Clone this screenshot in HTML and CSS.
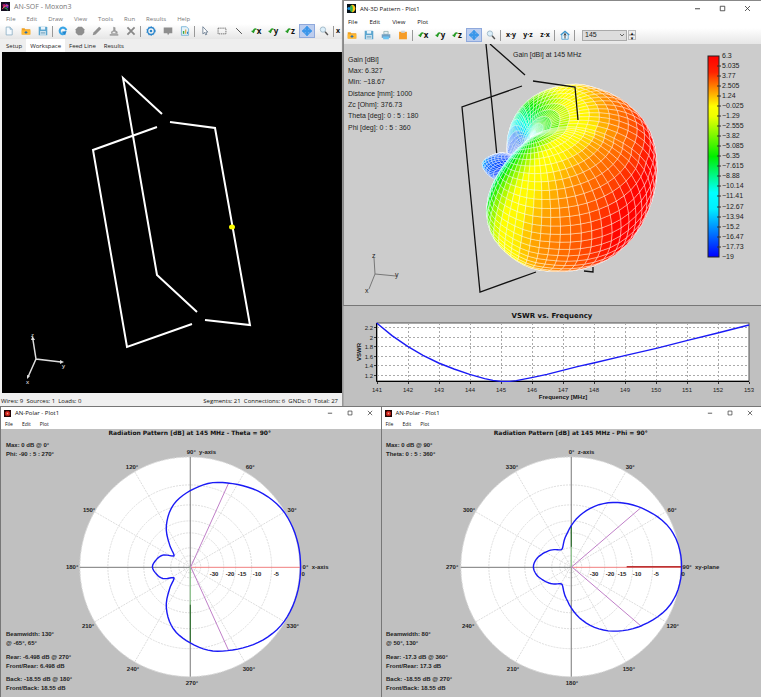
FILE: index.html
```html
<!DOCTYPE html>
<html lang="en">
<head>
<meta charset="utf-8">
<title>AN-SOF - Moxon3</title>
<link rel="stylesheet" href="styles.css">
</head>
<body>
<svg class="defs" width="0" height="0" aria-hidden="true">
  <defs>
    <linearGradient id="spectrum" x1="0" y1="0" x2="0" y2="1">
      <stop offset="0" stop-color="#f00"/><stop offset=".08" stop-color="#f20"/><stop offset=".25" stop-color="#ff0"/><stop offset=".3" stop-color="#ef0"/>
      <stop offset=".5" stop-color="#0e0"/><stop offset=".68" stop-color="#0ff"/><stop offset=".76" stop-color="#0ef"/><stop offset="1" stop-color="#00f"/>
    </linearGradient>
    <symbol id="new" viewBox="0 0 14 14"><path d="M3 1.5h5.5l3 3v8H3z" fill="#f4faff" stroke="#7fa5bd"/><path d="M8.5 1.5v3h3" fill="#cfe6f5" stroke="#7fa5bd"/></symbol>
    <symbol id="open" viewBox="0 0 14 14"><path d="M1 3h4l1 1.500h7V12H1z" fill="#f0a020"/><path d="M1 6h12v6H1z" fill="#ffb933"/><path d="M7 7v4M5 9h4" stroke="#2c6fae" stroke-width="1.500"/></symbol>
    <symbol id="save" viewBox="0 0 14 14"><path d="M1 1h11l1 1v11H1z" fill="#5aa5cf"/><path d="M4 1h6v4H4z" fill="#e8f3fa"/><path d="M3 7h8v6H3z" fill="#d5e8f3"/><path d="M4 9h6M4 11h6" stroke="#6e9fbb"/></symbol>
    <symbol id="undo" viewBox="0 0 14 14"><path d="M11.500 6a4.600 4.600 0 1 0-2.500 5" fill="none" stroke="#3aa5e6" stroke-width="3"/><path d="M5 8l7-1-2 6z" fill="#1f86cf"/></symbol>
    <symbol id="stop" viewBox="0 0 14 14"><path d="M4.500 1h5L13 4.500v5L9.500 13h-5L1 9.500v-5z" fill="#8e8e8e"/></symbol>
    <symbol id="pen" viewBox="0 0 14 14"><path d="M1 13l1-4 8-8 3 3-8 8z" fill="#909090"/></symbol>
    <symbol id="stamp" viewBox="0 0 14 14"><path d="M6 1l3 1v4l3 2v3H3V8l3-2z" fill="#999"/><path d="M1 12.500h12" stroke="#777" stroke-width="1.500"/><path d="M5 8h4v2H5z" fill="#eee"/></symbol>
    <symbol id="del" viewBox="0 0 14 14"><path d="M2 2l10 10M12 2L2 12" stroke="#888" stroke-width="2.500"/></symbol>
    <symbol id="gear" viewBox="0 0 14 14"><circle cx="7" cy="7" r="4.800" fill="none" stroke="#2b86cc" stroke-width="2"/><circle cx="7" cy="7" r="6.200" fill="none" stroke="#2b86cc" stroke-dasharray="2 2"/><circle cx="7" cy="7" r="1.800" fill="#2b86cc"/></symbol>
    <symbol id="note" viewBox="0 0 14 14"><path d="M1 2h12v8H9l-2 3-1-3H1z" fill="#8e8e8e"/></symbol>
    <symbol id="report" viewBox="0 0 14 14"><path d="M2 1h7l3 3v9H2z" fill="#e4f2fa" stroke="#5aa5cf"/><path d="M5 11V7" stroke="#39a845" stroke-width="2"/><path d="M8 11V5" stroke="#e0a030" stroke-width="1.500"/><path d="M10.500 11V8" stroke="#2c7fc0" stroke-width="1.500"/></symbol>
    <symbol id="arrow" viewBox="0 0 14 14"><path d="M4 1v10l2.500-2L8 12.500l1.500-.8L8.200 8.500H11z" fill="#fff" stroke="#51657e"/></symbol>
    <symbol id="rect" viewBox="0 0 14 14"><path d="M1.500 3h11v8h-11z" fill="none" stroke="#444" stroke-dasharray="2 1"/></symbol>
    <symbol id="line" viewBox="0 0 14 14"><path d="M3 3l8 8" stroke="#444" stroke-width="1.300"/></symbol>
    <symbol id="rot" viewBox="0 0 14 14"><path d="M13 3C8 1 5 4 6 11" fill="none" stroke="#259b24" stroke-width="3"/><path d="M0 7l10-3-4 8z" fill="#259b24"/></symbol>
    <symbol id="move" viewBox="0 0 14 14"><path d="M7 0l3 3.500H8.500v2h2V4L14 7l-3.500 3V8.500h-2v2H10L7 14l-3-3.500h1.500v-2h-2V10L0 7l3.500-3v1.500h2v-2H4z" fill="#3b97ea" stroke="#3b97ea"/></symbol>
    <symbol id="find" viewBox="0 0 14 14"><circle cx="5.500" cy="5" r="3.700" fill="#dceffa" stroke="#9ab4c4" stroke-width="1.200"/><path d="M8.500 8l4 4.500" stroke="#555" stroke-width="2"/></symbol>
    <symbol id="print" viewBox="0 0 14 14"><path d="M4 2h6v4H4z" fill="#e3eef5" stroke="#8aa"/><path d="M1 6h12v5H1z" fill="#6f9fc2"/><path d="M3 9h8v4H3z" fill="#6ac3f2"/></symbol>
    <symbol id="clip" viewBox="0 0 14 14"><path d="M1.500 2.500h11V13h-11z" fill="#f69c26"/><path d="M4.500 1h5v3h-5z" fill="#cfd4d8"/></symbol>
    <symbol id="home" viewBox="0 0 14 14"><path d="M2.500 6v7h9V6" fill="#e8f5fc" stroke="#3b95cc"/><path d="M1 7l6-5 6 5" fill="none" stroke="#3b95cc" stroke-width="1.800"/><path d="M7 5v7M5.500 7.500L7 5l1.500 2.500" stroke="#444" stroke-width="1.400" fill="none"/></symbol>
    <symbol id="min" viewBox="0 0 14 14"><path d="M2 7.500h10" stroke="#333" stroke-width="1.800"/></symbol>
    <symbol id="max" viewBox="0 0 14 14"><path d="M2.500 2.500h9v9h-9z" fill="none" stroke="#333" stroke-width="1.600"/></symbol>
    <symbol id="close" viewBox="0 0 14 14"><path d="M2 2l10 10M12 2L2 12" stroke="#333" stroke-width="1.600"/></symbol>
    <symbol id="app" viewBox="0 0 14 14"><path d="M0 0h14v14H0z" fill="#150c20"/><path d="M2 4l4-1 2 3-4 4z" fill="#b51d6f"/><path d="M7 2l5 3-1 5-3-2z" fill="#7a35c8"/><path d="M5 9l4 1 1 3" stroke="#35b860" fill="none" stroke-width="1.500"/><path d="M2 11l3-4 6-2" stroke="#ef5a6a" fill="none" stroke-width="1.500"/></symbol>
    <symbol id="app3d" viewBox="0 0 14 14"><path d="M0 0h14v14H0z" fill="#061018"/><path d="M5 7c0-9 8-6 8 0s-8 9-8 0z" fill="#ffc414"/><path d="M5 7c0-7 4-7 4 0s-4 8-4 0z" fill="#28b04a"/><circle cx="3" cy="7" r="2.500" fill="#2192d8"/></symbol>
    <symbol id="appolar" viewBox="0 0 14 14"><path d="M0 0h14v14H0z" fill="#240606"/><circle cx="7" cy="7" r="5" fill="#e0261c"/><path d="M7 2v10M2 7h10" stroke="#8d1210"/><circle cx="7" cy="7" r="1.800" fill="#ff9a8a"/></symbol>
    <g id="polargrid">
      <circle class="disc" cx="190" cy="138" r="110"/>
      <g class="grid">
        <circle cx="190" cy="138" r="110"/><circle cx="190" cy="138" r="82"/><circle cx="190" cy="138" r="62"/><circle cx="190" cy="138" r="46"/>
        <circle cx="190" cy="138" r="34"/><circle cx="190" cy="138" r="19"/><circle cx="190" cy="138" r="11"/><circle cx="190" cy="138" r="6"/>
        <path d="M95 83l190 110M95 193L285 83M135 43l110 190M135 233L245 43"/>
      </g>
      <path class="axis" d="M80 138.500h110M190.500 28v220"/>
      <path class="red" d="M191 138.500h110"/>
    </g>
  </defs>
</svg>
<main class="desktop">
  <div class="upper">
    <section class="window main-window">
      <header class="titlebar"><svg class="logo"><use href="#app"/></svg><h1 class="title muted">AN-SOF - Moxon3</h1></header>
      <nav class="menubar muted"><button>File</button><button>Edit</button><button>Draw</button><button>View</button><button>Tools</button><button>Run</button><button>Results</button><button>Help</button></nav>
      <div class="toolbar">
        <button aria-label="New"><svg><use href="#new"/></svg></button>
        <button aria-label="Open"><svg><use href="#open"/></svg></button>
        <button aria-label="Save"><svg><use href="#save"/></svg></button>
        <i class="sep"></i>
        <button aria-label="Undo"><svg><use href="#undo"/></svg></button>
        <button aria-label="Stop"><svg><use href="#stop"/></svg></button>
        <button aria-label="Edit wire"><svg><use href="#pen"/></svg></button>
        <button aria-label="Stamp"><svg><use href="#stamp"/></svg></button>
        <button aria-label="Delete"><svg><use href="#del"/></svg></button>
        <i class="sep"></i>
        <button aria-label="Preferences"><svg><use href="#gear"/></svg></button>
        <button aria-label="Notes"><svg><use href="#note"/></svg></button>
        <button aria-label="Report"><svg><use href="#report"/></svg></button>
        <i class="sep"></i>
        <button aria-label="Select"><svg><use href="#arrow"/></svg></button>
        <button aria-label="Select area"><svg><use href="#rect"/></svg></button>
        <button aria-label="Line"><svg><use href="#line"/></svg></button>
        <button class="turn"><svg><use href="#rot"/></svg>x</button>
        <button class="turn"><svg><use href="#rot"/></svg>y</button>
        <button class="turn"><svg><use href="#rot"/></svg>z</button>
        <button class="active" aria-label="Move"><svg><use href="#move"/></svg></button>
        <button aria-label="Zoom"><svg><use href="#find"/></svg></button>
        <i class="sep"></i>
        <button class="plane">x</button>
      </div>
      <nav class="tabs"><button>Setup</button><button class="current">Workspace</button><button>Feed Line</button><button>Results</button></nav>
      <svg class="workspace" viewBox="0 0 340 341" role="img" aria-label="Antenna wires">
        <path class="wire" d="M160 62L121 26l34 197 40 37M155 75L91 98l34 197 65-23M168 70l45 6 35 197-45-5"/>
        <ellipse cx="230" cy="175" rx="3" ry="2.500" fill="#ff0"/>
        <path class="triad" d="M31 288l3 19 25 3M34 307l-8 18"/>
        <path d="M29 288l1.500-4 2.500 4zM58 308l4 2-4 2zM25 323l3 1-3 3z" fill="#ddd"/>
        <g class="ws-label"><text x="29" y="285">z</text><text x="60" y="316">y</text><text x="24" y="332">x</text></g>
      </svg>
      <footer class="status"><span>Wires: 9&nbsp; Sources: 1&nbsp; Loads: 0</span><span class="right">Segments: 21&nbsp; Connections: 6&nbsp; GNDs: 0&nbsp; Total: 27</span></footer>
    </section>
    <div class="side">
      <section class="window pattern">
        <header class="titlebar"><svg class="logo"><use href="#app3d"/></svg><h2 class="title">AN-3D Pattern - Plot1</h2>
          <div class="controls"><button aria-label="Minimize"><svg><use href="#min"/></svg></button><button aria-label="Maximize"><svg><use href="#max"/></svg></button><button aria-label="Close"><svg><use href="#close"/></svg></button></div></header>
        <nav class="menubar"><button>File</button><button>Edit</button><button>View</button><button>Plot</button></nav>
        <div class="toolbar">
          <button aria-label="Open"><svg><use href="#open"/></svg></button>
          <button aria-label="Save"><svg><use href="#save"/></svg></button>
          <button aria-label="Print"><svg><use href="#print"/></svg></button>
          <button aria-label="Copy"><svg><use href="#clip"/></svg></button>
          <i class="sep"></i>
          <button class="turn"><svg><use href="#rot"/></svg>x</button>
          <button class="turn"><svg><use href="#rot"/></svg>y</button>
          <button class="turn"><svg><use href="#rot"/></svg>z</button>
          <button class="active" aria-label="Move"><svg><use href="#move"/></svg></button>
          <button aria-label="Zoom"><svg><use href="#find"/></svg></button>
          <i class="sep"></i>
          <button class="plane">x·y</button><button class="plane">y·z</button><button class="plane">z·x</button>
          <i class="sep"></i>
          <button aria-label="Home"><svg><use href="#home"/></svg></button>
          <i class="sep"></i>
          <span class="combo"><select aria-label="Frequency"><option>145</option></select><svg class="chevron" viewBox="0 0 6 4"><path d="M1 1l2 2 2-2"/></svg></span>
          <span class="spin"><button aria-label="Up">▴</button><button aria-label="Down">▾</button></span>
        </div>
        <svg class="plot3d" viewBox="1 0 417 261" role="img" aria-label="3D gain pattern">
          <g class="info"><text x="170" y="13">Gain [dBi] at 145 MHz</text><text x="5" y="18">Gain [dBi]</text><text x="5" y="29">Max: 6.327</text><text x="5" y="40">Min: −18.67</text><text x="5" y="52">Distance [mm]: 1000</text><text x="5" y="63">Zc [Ohm]: 376.73</text><text x="5" y="74">Theta [deg]: 0 : 5 : 180</text><text x="5" y="86">Phi [deg]: 0 : 5 : 360</text></g>
          <path class="ink" d="M143 0l11 112M147 0l35 31M179 42l-60 21 18 185 56-20M241 227l9 1v-5"/>
          <g id="surface"></g>
          <path class="ink" d="M190 37l42 6 3 33"/>
          <path class="axes3d" d="M31 214l1 16 21 2M32 230l-6 15"/>
          <g class="info"><text x="29" y="214">z</text><text x="52" y="233">y</text><text x="22" y="249">x</text></g>
          <rect x="365" y="12" width="11" height="201" fill="url(#spectrum)" stroke="#222"/>
          <path class="ticks" d="M374 22h4M374 32h4M374 42h4M374 52h4M374 62h4M374 72h4M374 82h4M374 92h4M374 102h4M374 112h4M374 122h4M374 132h4M374 142h4M374 152h4M374 163h4M374 173h4M374 183h4M374 193h4M374 203h4"/>
          <g class="info"><text x="379" y="14">6.3</text><text x="379" y="24">5.035</text><text x="379" y="34">3.77</text><text x="379" y="44">2.505</text><text x="379" y="54">1.24</text><text x="379" y="64">−0.025</text><text x="379" y="74">−1.29</text><text x="379" y="84">−2.555</text><text x="379" y="94">−3.82</text><text x="379" y="104">−5.085</text><text x="379" y="114">−6.35</text><text x="379" y="124">−7.615</text><text x="379" y="134">−8.88</text><text x="379" y="144">−10.14</text><text x="379" y="154">−11.41</text><text x="379" y="165">−12.67</text><text x="379" y="175">−13.94</text><text x="379" y="185">−15.2</text><text x="379" y="195">−16.47</text><text x="379" y="205">−17.73</text><text x="379" y="215">−19</text></g>
        </svg>
      </section>
      <section class="vswr">
        <svg viewBox="1 0 417 100" role="img" aria-label="VSWR vs. Frequency">
          <text class="heading" x="209" y="12">VSWR vs. Frequency</text>
          <rect x="34" y="17" width="372" height="58" fill="#fff" stroke="#555"/>
          <path class="dash" d="M34 21.500h372M34 31.500h372M34 40.500h372M34 50.500h372M34 59.500h372M34 69.500h372M65.500 17v58M96.500 17v58M127.500 17v58M158.500 17v58M189.500 17v58M220.500 17v58M251.500 17v58M282.500 17v58M313.500 17v58M344.500 17v58M375.500 17v58"/>
          <path class="ticks" d="M31 21.500h3M31 31.500h3M31 40.500h3M31 50.500h3M31 59.500h3M31 69.500h3M34.500 76v2M65.500 76v2M96.500 76v2M127.500 76v2M158.500 76v2M189.500 76v2M220.500 76v2M251.500 76v2M282.500 76v2M313.500 76v2M344.500 76v2M375.500 76v2M406.500 76v2"/>
          <path d="M33.500 17v58.500h372.500" fill="none" stroke="#000"/>
          <polyline class="curve" transform="translate(0 -1) scale(.3333)" points="101,54 147,92 194,124 240,151 287,174 333,192 380,208 425,221 450,226 474,229 500,229 520,227 566,218 612,208 659,196 706,184 752,174 845,152 940,130 1031,107 1124,84 1218,60"/>
          <g class="tick-label end"><text x="30" y="24">2.2</text><text x="30" y="34">2</text><text x="30" y="43">1.8</text><text x="30" y="53">1.6</text><text x="30" y="62">1.4</text><text x="30" y="72">1.2</text></g>
          <g class="tick-label mid"><text x="34" y="86">141</text><text x="65" y="86">142</text><text x="96" y="86">143</text><text x="127" y="86">144</text><text x="158" y="86">145</text><text x="189" y="86">146</text><text x="220" y="86">147</text><text x="251" y="86">148</text><text x="282" y="86">149</text><text x="313" y="86">150</text><text x="344" y="86">151</text><text x="375" y="86">152</text><text x="406" y="86">153</text></g>
          <text class="axis-label" x="220" y="93">Frequency [MHz]</text>
          <text class="axis-label" transform="translate(18 46) rotate(-90)">VSWR</text>
        </svg>
      </section>
    </div>
  </div>
  <div class="lower">
    <section class="window polar">
      <header class="titlebar"><svg class="logo"><use href="#appolar"/></svg><h2 class="title">AN-Polar - Plot1</h2>
        <div class="controls"><button aria-label="Minimize"><svg><use href="#min"/></svg></button><button aria-label="Maximize"><svg><use href="#max"/></svg></button><button aria-label="Close"><svg><use href="#close"/></svg></button></div></header>
      <nav class="menubar"><button>File</button><button>Edit</button><button>Plot</button></nav>
      <svg viewBox="1 0 380 268" role="img" aria-label="Radiation pattern, Theta 90 degrees">
        <use href="#polargrid"/>
        <path class="green" d="M190.500 138v38"/><path class="dark-green" d="M190.500 176v38"/>
        <path class="beam" d="M229 54l-38 84 38 84"/>
        <path class="curve" id="azimuth"/>
        <text class="heading small" x="190" y="6">Radiation Pattern [dB] at 145 MHz - Theta = 90°</text>
        <g class="note"><text x="6" y="18">Max: 0 dB @ 0°</text><text x="6" y="27">Phi: -90 : 5 : 270°</text><text x="6" y="207">Beamwidth: 130°</text><text x="6" y="216">@ -65°, 65°</text><text x="6" y="230">Rear: -6.498 dB @ 270°</text><text x="6" y="239">Front/Rear: 6.498 dB</text><text x="6" y="252">Back: -18.55 dB @ 180°</text><text x="6" y="261">Front/Back: 18.55 dB</text>
        <text x="187" y="25">90°&nbsp; y-axis</text><text x="126" y="40">120°</text><text x="246" y="40">60°</text><text x="83" y="83">150°</text><text x="288" y="83">30°</text><text x="66" y="140">180°</text><text x="303" y="140">0°&nbsp; x-axis</text><text x="82" y="199">210°</text><text x="287" y="199">330°</text><text x="127" y="242">240°</text><text x="243" y="242">300°</text><text x="186" y="256">270°</text>
        <text x="210" y="147">-30</text><text x="226" y="147">-20</text><text x="238" y="147">-15</text><text x="253" y="147">-10</text><text x="274" y="147">-5</text><text x="302" y="147">0</text></g>
      </svg>
    </section>
    <section class="window polar">
      <header class="titlebar"><svg class="logo"><use href="#appolar"/></svg><h2 class="title">AN-Polar - Plot1</h2>
        <div class="controls"><button aria-label="Minimize"><svg><use href="#min"/></svg></button><button aria-label="Maximize"><svg><use href="#max"/></svg></button><button aria-label="Close"><svg><use href="#close"/></svg></button></div></header>
      <nav class="menubar"><button>File</button><button>Edit</button><button>Plot</button></nav>
      <svg viewBox="1 0 380 268" role="img" aria-label="Radiation pattern, Phi 90 degrees">
        <use href="#polargrid"/>
        <path class="green" d="M190.500 138v-20"/><path class="dark-green" d="M190.500 118V97"/>
        <path class="dark-red" d="M246 138h55"/>
        <path class="beam" d="M260 79l-69 59 69 59"/>
        <path class="curve" id="elevation"/>
        <text class="heading small" x="190" y="6">Radiation Pattern [dB] at 145 MHz - Phi = 90°</text>
        <g class="note"><text x="5" y="18">Max: 0 dB @ 90°</text><text x="5" y="27">Theta: 0 : 5 : 360°</text><text x="5" y="207">Beamwidth: 80°</text><text x="5" y="216">@ 50°, 130°</text><text x="5" y="230">Rear: -17.3 dB @ 360°</text><text x="5" y="239">Front/Rear: 17.3 dB</text><text x="5" y="252">Back: -18.55 dB @ 270°</text><text x="5" y="261">Front/Back: 18.55 dB</text>
        <text x="188" y="25">0°&nbsp; z-axis</text><text x="125" y="40">330°</text><text x="245" y="40">30°</text><text x="82" y="83">300°</text><text x="287" y="83">60°</text><text x="65" y="140">270°</text><text x="302" y="140">90°&nbsp; xy-plane</text><text x="81" y="199">240°</text><text x="286" y="199">120°</text><text x="126" y="242">210°</text><text x="242" y="242">150°</text><text x="185" y="256">180°</text>
        <text x="209" y="147">-30</text><text x="225" y="147">-20</text><text x="237" y="147">-15</text><text x="252" y="147">-10</text><text x="273" y="147">-5</text><text x="301" y="147">0</text></g>
      </svg>
    </section>
  </div>
</main>
<script src="plots.js"></script>
</body>
</html>
```
FILE: styles.css
```css
* { box-sizing: border-box; }
body { margin: 0; background: #c0c0c0; color: #111; font: 6px/8px "Open Sans", "Noto Sans", sans-serif; }
.defs { position: absolute; }
button { padding: 0; border: 0; background: none; color: inherit; font: inherit; white-space: nowrap; }
svg { display: block; }
.upper { display: grid; grid-template-columns: 343fr 418fr; }
.lower { display: grid; grid-template-columns: 1fr 1fr; }
.window { display: flex; flex-direction: column; min-width: 0; }
.titlebar { display: flex; align-items: center; gap: 4px; height: 13px; padding: 0 1px; background: #fff; }
.logo { width: 9px; height: 9px; }
.title { margin: 0; font-size: 7px; font-weight: 400; }
.muted { color: #777; }
.menubar { display: flex; gap: 11px; height: 11px; padding: 0 6px; background: #fff; }
.main-window { background: #f0f0f0; border-right: 1px solid #999; }
.toolbar { display: flex; align-items: center; gap: 1px; height: 15px; padding: 0 1px 1px; background: linear-gradient(#fff, #e6e6e6); overflow: hidden; }
.toolbar button { display: flex; flex: none; align-items: center; justify-content: center; width: 16px; height: 14px; }
.toolbar button svg { width: 10px; height: 10px; }
.toolbar .turn { font: bold 8px/8px "Open Sans", sans-serif; align-items: center; }
.toolbar .turn svg { width: 6px; height: 8px; }
.toolbar .plane { font: bold 7px/8px "Open Sans", sans-serif; }
.toolbar .plane:last-child { justify-content: flex-start; }
.toolbar .active { background: #bccdee; border: 1px solid #8fa9dc; }
.sep { flex: none; width: 2px; height: 11px; border-left: 1px solid #999; }
.tabs { display: flex; height: 13px; padding: 0 2px; background: #eee; }
.tabs button { padding: 0 4px; color: #222; }
.tabs .current { background: #fff; }
.workspace { width: calc(100% - 2px); margin-left: 2px; background: #000; }
.wire { fill: none; stroke: #fff; stroke-width: 2; }
.triad { fill: none; stroke: #ddd; stroke-width: 1.5px; }
.ws-label { fill: #fff; font: 6px "Open Sans", sans-serif; }
.status { display: flex; flex: 1; align-items: center; justify-content: space-between; min-height: 12px; padding: 2px 4px 0 1px; white-space: nowrap; }
.side { display: flex; flex-direction: column; }
.pattern { border-top: 1px solid #888; border-left: 1px solid #888; border-bottom: 1px solid #777; background: #ccc; box-shadow: 0 1px 2px #888; }
.pattern .titlebar { height: 15px; padding: 0 3px; }
.pattern .title, .polar .title { font-size: 6px; }
.pattern .menubar { height: 12px; gap: 12px; padding: 0 4px; }
.pattern .toolbar { height: 16px; padding: 0 0 2px; }
.controls { display: flex; gap: 18px; margin-left: auto; padding-right: 7px; }
.controls svg { width: 7px; height: 7px; }
.combo { display: flex; position: relative; width: 45px; height: 11px; margin-left: 5px; }
.combo select { width: 100%; padding: 0 2px; border: 1px solid #aaa; border-radius: 0; background: #ddd; color: #222; font: 7px/8px "Liberation Sans", sans-serif; appearance: none; }
.chevron { position: absolute; right: 2px; top: 3px; width: 6px; height: 4px; fill: none; stroke: #666; }
.spin { display: flex; flex-direction: column; width: 8px; }
.toolbar .spin button { width: 8px; height: 5px; border: 1px solid #bbb; background: #eee; font: 5px/4px "DejaVu Sans", sans-serif; }
.plot3d { width: 100%; }
.info { fill: #222; font: 7px "Liberation Sans", sans-serif; }
.ink { fill: none; stroke: #111; stroke-width: 1.3px; }
.axes3d { fill: none; stroke: #777; stroke-width: 1; }
.ticks { fill: none; stroke: #333; stroke-width: 1; }
#surface path { stroke: #fff; stroke-opacity: .7; stroke-width: .6px; }
.vswr { background: #c0c0c0; border-left: 1px solid #aaa; }
.heading { fill: #111; font: bold 7px "DejaVu Sans", sans-serif; text-anchor: middle; }
.small { font-size: 6px; }
.dash { fill: none; stroke: #aaa; stroke-dasharray: 2 2; }
.curve { fill: none; stroke: #1a1af5; stroke-width: 1.4px; vector-effect: non-scaling-stroke; }
.tick-label { fill: #222; font: 6px "Liberation Sans", sans-serif; }
.end { text-anchor: end; }
.mid { text-anchor: middle; }
.axis-label { fill: #111; font: bold 6px "Liberation Sans", sans-serif; text-anchor: middle; }
.polar { border-left: 1px solid #777; border-top: 1px solid #777; background: #c0c0c0; }
.polar .titlebar { height: 12px; padding: 0 3px; }
.polar .menubar { gap: 9px; height: 10px; padding: 0 4px; font-size: 5px; }
.polar .controls { gap: 14px; padding-right: 5px; }
.polar .controls svg { width: 6px; height: 6px; }
.polar .logo { width: 7px; height: 7px; }
.disc { fill: #fff; }
.grid { fill: none; stroke: #ddd; stroke-dasharray: 2 1; }
.axis { fill: none; stroke: #777; }
.red { stroke: #f08080; }
.dark-red { stroke: #b33; stroke-width: 1.5px; }
.green { stroke: #8fd08f; }
.dark-green { stroke: #1c6a1c; }
.beam { fill: none; stroke: #c080c8; }
.note { fill: #222; font: bold 6px "Liberation Sans", sans-serif; }
```
FILE: plots.js
```js
// Relative radius against angle from boresight, in degrees
const azimuth = [[0,1],[30,.985],[45,.935],[65,.836],[75,.79],[90,.69],[106,.575],[122,.41],[132,.286],[146,.178],[157,.27],[168,.314],[180,.343]];
const elevation = [[0,1],[20,.965],[40,.83],[54,.72],[66,.616],[80,.477],[90,.373],[99,.29],[119,.18],[141,.24],[157,.29],[168,.325],[180,.343]];

function radius(table, a) {
  let i = 0;
  while (i < table.length - 2 && a > table[i + 1][0]) i++;
  const slope = k => {
    if (k === 0 || k === table.length - 1) return 0;
    const p = table[k - 1], q = table[k + 1];
    if (table[k][1] < p[1] && table[k][1] < q[1]) return 0;
    return (q[1] - p[1]) / (q[0] - p[0]);
  };
  const [x0, y0] = table[i], [x1, y1] = table[i + 1];
  const h = x1 - x0, t = (a - x0) / h;
  return (2*t*t*t - 3*t*t + 1) * y0 + (t*t*t - 2*t*t + t) * h * slope(i)
    + (3*t*t - 2*t*t*t) * y1 + (t*t*t - t*t) * h * slope(i + 1);
}

function drawCut(id, table) {
  let d = '';
  const angles = table.map(k => k[0]);
  for (let a = 0; a <= 180; a += 3) angles.push(a);
  angles.sort((a, b) => a - b);
  const full = angles.map(a => -a).reverse().concat(angles);
  for (const a of full) {
    const r = 110.5 * radius(table, Math.abs(a)), t = a * Math.PI / 180;
    d += (d ? 'L' : 'M') + (190.5 + r * Math.cos(t)).toFixed(1) + ' ' + (138 - r * Math.sin(t)).toFixed(1);
  }
  document.getElementById(id).setAttribute('d', d + 'Z');
}
drawCut('azimuth', azimuth);
drawCut('elevation', elevation);

const stops = [[0,[0,60,255]],[.2,[30,120,255]],[.3,[0,225,255]],[.38,[0,255,230]],[.55,[0,238,0]],[.72,[255,255,0]],[.79,[255,245,0]],[.86,[255,150,0]],[.94,[255,80,0]],[.985,[255,5,0]],[1,[255,0,0]]];
function colour(r) {
  const v = Math.max(0, Math.min(1, 1 + 2 * Math.log(r) / Math.log(1 / .89) / 25.3));
  let i = 0;
  while (i < stops.length - 2 && v > stops[i + 1][0]) i++;
  const [a, ca] = stops[i], [b, cb] = stops[i + 1];
  return 'rgb(' + ca.map((c, k) => Math.round(c + (cb[k] - c) * (v - a) / (b - a))).join(',') + ')';
}

function point(theta, phi) {
  const x = Math.sin(theta) * Math.cos(phi), y = Math.sin(theta) * Math.sin(phi), z = Math.cos(theta);
  const a = Math.acos(Math.max(-1, Math.min(1, y))) * 180 / Math.PI;
  const side = x * x + z * z, c = Math.pow(side > 1e-9 ? x * x / side : 1, .5), s = 1 - c;
  const dip = 146 * c + 119 * s;
  const at = n => a <= dip ? a / dip * n : n + (a - dip) / (180 - dip) * (180 - n);
  const r = c * radius(azimuth, at(146)) + s * radius(elevation, at(119));
  const back = a > dip ? .8 : 1;
  return { r, u: 183 + 132 * r * (-.22 * x + .965 * y + .1 * z), v: 127 + 129 * r * (.71 * x * back + .18 * y - .69 * z * back), w: r * (.66 * x + .207 * y + .724 * z) };
}

const rad = Math.PI / 180, faces = [];
for (let t = 0; t < 180; t += 5) {
  for (let p = 0; p < 360; p += 5) {
    const q = [point(t*rad, p*rad), point((t+5)*rad, p*rad), point((t+5)*rad, (p+5)*rad), point(t*rad, (p+5)*rad)];
    faces.push({ q, w: q.reduce((s, k) => s + k.w, 0), r: q.reduce((s, k) => s + k.r, 0) / 4 });
  }
}
faces.sort((a, b) => a.w - b.w);
document.getElementById('surface').innerHTML = faces.map(f =>
  '<path fill="' + colour(f.r) + '" d="M' + f.q.map(k => k.u.toFixed(1) + ' ' + k.v.toFixed(1)).join('L') + 'Z"/>').join('');
```
